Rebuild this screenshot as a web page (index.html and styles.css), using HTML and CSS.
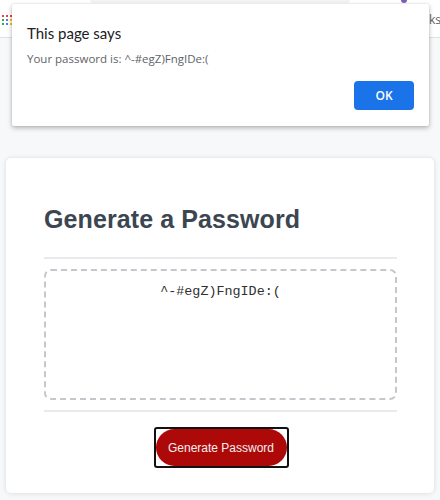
FILE: index.html
```html
<!DOCTYPE html>
<html lang="en">
<head>
<meta charset="utf-8">
<title>Password Generator</title>
<link rel="stylesheet" href="styles.css">
</head>
<body>
<header class="toolbar">
  <div class="omnirow">
    <span class="omnibox"></span>
    <span class="avatar"></span>
  </div>
  <div class="bookmarks">
    <span class="apps">
      <i class="r"></i><i class="r"></i><i class="r"></i>
      <i class="g"></i><i class="b"></i><i class="y"></i>
      <i class="g"></i><i class="b"></i><i class="y"></i>
    </span>
    <span class="other">ks</span>
  </div>
</header>

<main class="wrapper">
  <section class="card">
    <h2 class="title">Generate a Password</h2>
    <hr class="rule">
    <div class="output">^-#egZ)FngIDe:(</div>
    <hr class="rule">
    <div class="actions">
      <span class="focus-ring"><button class="btn" type="button">Generate Password</button></span>
    </div>
  </section>
</main>

<div class="dialog" role="alertdialog">
  <div class="dialog-title">This page says</div>
  <div class="dialog-msg">Your password is: ^-#egZ)FngIDe:(</div>
  <div class="dialog-actions"><button class="ok" type="button">OK</button></div>
</div>
</body>
</html>
```

FILE: styles.css
```css
* { box-sizing: border-box; }
html, body { margin: 0; padding: 0; }
body {
  background: #f7f8fa;
  font-family: "Liberation Sans", Arial, sans-serif;
  width: 440px;
  height: 500px;
  overflow: hidden;
  position: relative;
}

.toolbar {
  background: #ffffff;
  height: 38px;
  border-bottom: 1px solid #dfe1e5;
  display: flex;
  flex-direction: column;
}
.omnirow {
  height: 4px;
  display: flex;
  align-items: flex-start;
}
.omnibox {
  margin-left: 90px;
  width: 260px;
  height: 3px;
  background: #f1f3f4;
  border-radius: 0 0 4px 4px;
}
.avatar {
  margin-left: 51px;
  width: 6px;
  height: 3px;
  background: #7b5fb0;
  border-radius: 0 0 3px 3px;
}
.bookmarks {
  flex: 1;
  display: flex;
  align-items: center;
  justify-content: space-between;
  padding-bottom: 2px;
}
.apps {
  margin-left: 2px;
  display: grid;
  grid-template-columns: repeat(3, 2px);
  grid-auto-rows: 2px;
  gap: 2px;
}
.apps i { display: block; width: 2px; height: 2px; }
.apps .r { background: #ea4335; }
.apps .g { background: #34a853; }
.apps .b { background: #4285f4; }
.apps .y { background: #fbbc04; }
.other {
  font-family: "Open Sans", "Noto Sans", sans-serif;
  font-size: 12px;
  color: #5f6368;
  margin-right: -1px;
}

.wrapper {
  padding: 120px 6px 0;
}
.card {
  background: #ffffff;
  border-radius: 5px;
  box-shadow: 0 0 4px rgba(0, 0, 0, 0.08), 0 1px 6px rgba(0, 0, 0, 0.05);
  padding: 47px 37px 27px 38px;
  height: 335px;
}
.title {
  margin: 0 0 24px;
  font-size: 25px;
  font-weight: bold;
  color: #3b4651;
  line-height: 28px;
  letter-spacing: 0.1px;
}
.rule {
  margin: 0;
  border: 0;
  height: 2px;
  background: #e9eaec;
}
.output {
  margin: 10px 0;
  height: 131px;
  border: 2px dashed #c4c8cd;
  border-radius: 7px;
  padding: 13px 8px;
  text-align: center;
  font-family: "Liberation Mono", "DejaVu Sans Mono", monospace;
  font-size: 13.4px;
  line-height: 16px;
  color: #2f2f2f;
}
.actions {
  display: flex;
  justify-content: center;
  padding-top: 15px;
}
.focus-ring {
  display: inline-flex;
  border: 2px solid #111111;
  border-radius: 3px;
  margin-left: 1px;
}
.btn {
  width: 131px;
  height: 37px;
  border: 0;
  border-radius: 19px;
  background: #ae0909;
  color: #f4f0f0;
  font-family: "Liberation Sans", Arial, sans-serif;
  font-size: 12px;
  padding: 0;
}

.dialog {
  position: absolute;
  left: 12px;
  top: 4px;
  width: 417px;
  height: 122px;
  background: #ffffff;
  border-radius: 2px;
  box-shadow: 0 2px 5px rgba(0, 0, 0, 0.28), 0 0 2px rgba(0, 0, 0, 0.12);
  padding: 19px 15px 0 15px;
  font-family: "Open Sans", "Noto Sans", sans-serif;
}
.dialog-title {
  font-family: Lato, "Open Sans", sans-serif;
  font-size: 15px;
  color: #202124;
  line-height: 20px;
}
.dialog-msg {
  margin-top: 8px;
  font-size: 11.5px;
  color: #5f6368;
  line-height: 16px;
}
.dialog-actions {
  display: flex;
  justify-content: flex-end;
  margin-top: 14px;
}
.ok {
  width: 60px;
  height: 29px;
  border: 0;
  border-radius: 4px;
  background: #1a73e8;
  color: #ffffff;
  font-family: "Open Sans", "Noto Sans", sans-serif;
  font-weight: 600;
  font-size: 12px;
  padding: 0;
}
```
